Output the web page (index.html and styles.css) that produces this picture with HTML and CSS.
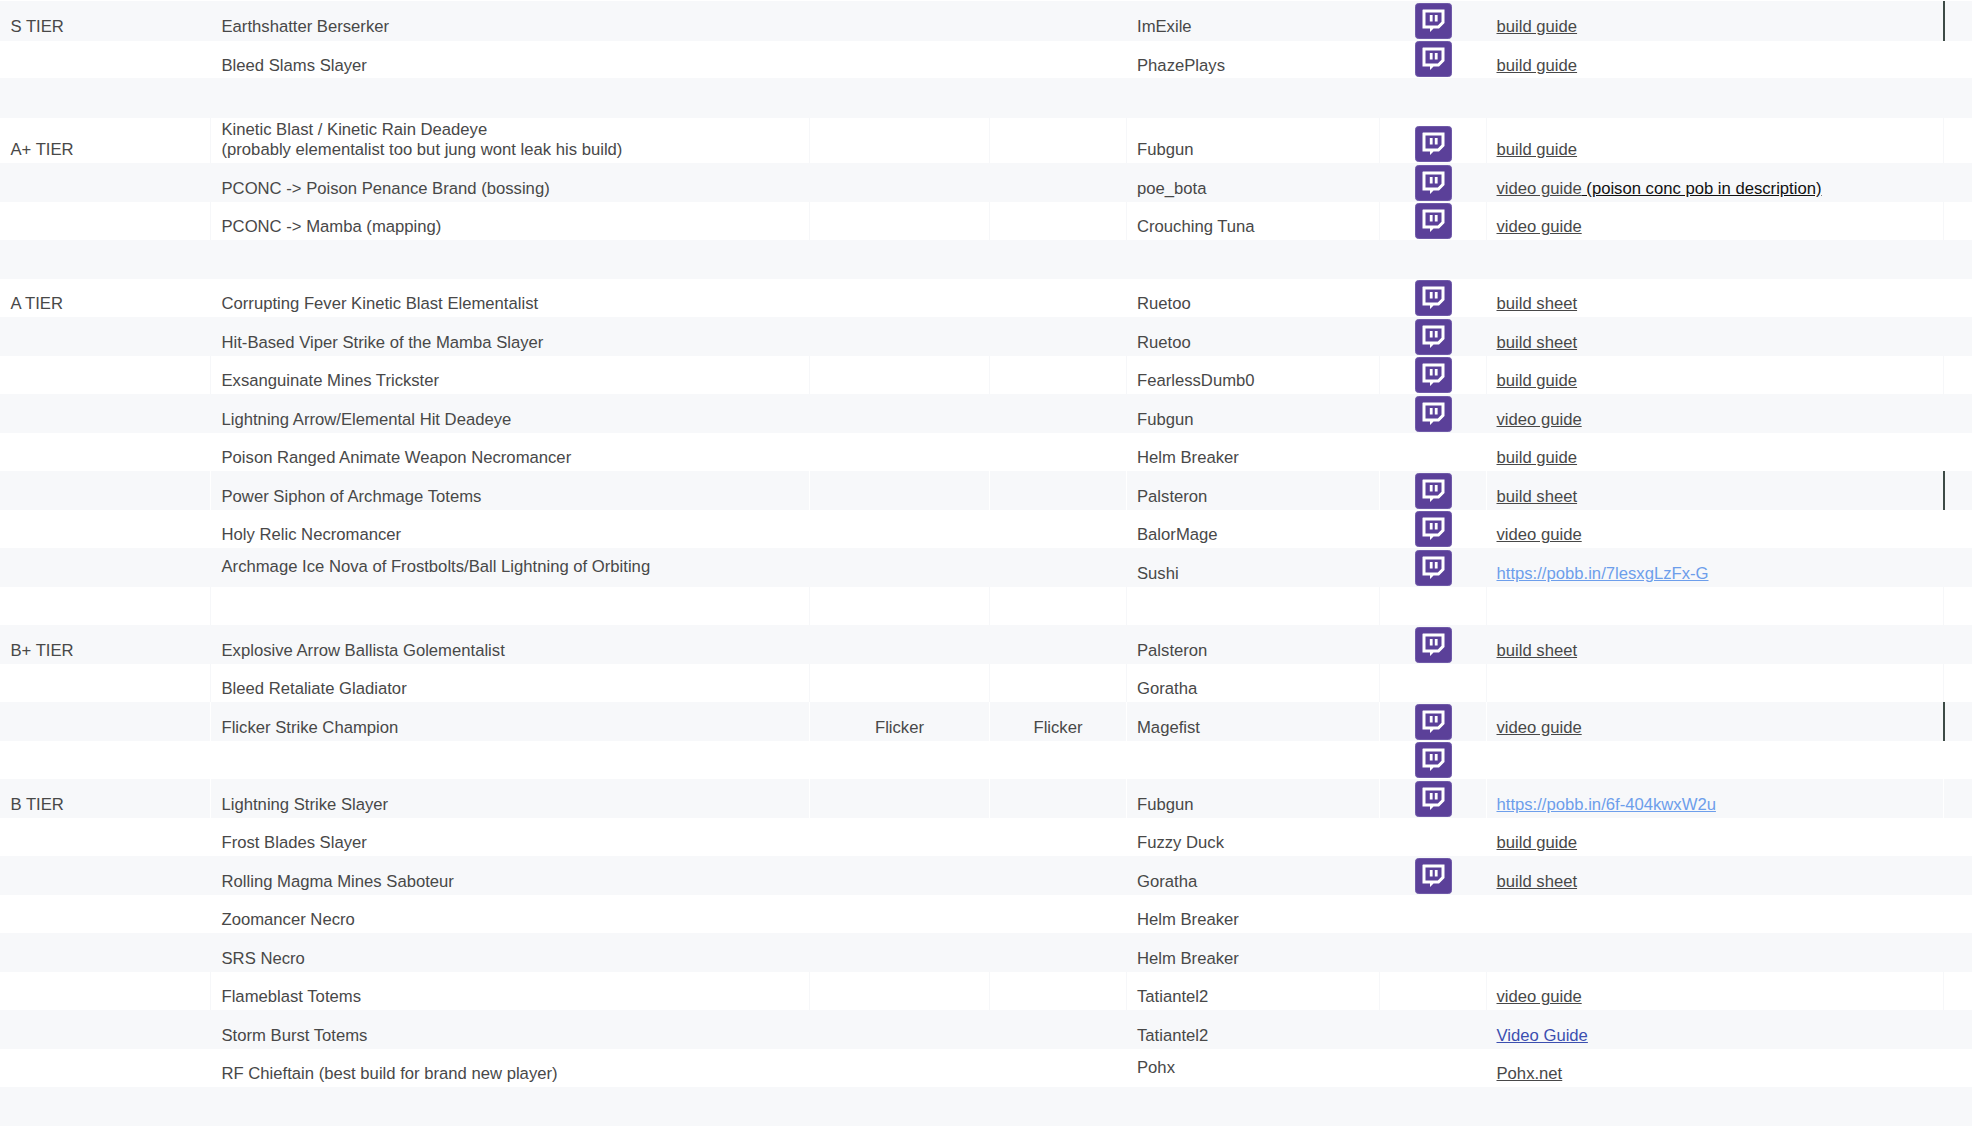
FILE: index.html
```html
<!DOCTYPE html>
<html lang="en">
<head>
<meta charset="utf-8">
<title>Build tier list</title>
<link rel="stylesheet" href="styles.css">
</head>
<body>
<svg class="sprite" width="0" height="0" aria-hidden="true">
  <symbol id="twitch" viewBox="0 0 37 36">
    <rect x=".5" y=".5" width="36" height="35" rx="3" fill="#5b4099" stroke="#6f5aa8"/>
    <path fill="#fff" fill-rule="evenodd" d="M8 6.500H29.500V20L24 25.500H18.500L15 29V25.500H7.500V7zM10.500 9.500V22.500H22.800L26.500 18.800V9.500z"/>
    <rect x="14.800" y="12" width="2.800" height="6.500" fill="#fff"/>
    <rect x="19.800" y="12" width="2.800" height="6.500" fill="#fff"/>
  </symbol>
</svg>
<table class="tiers">
  <colgroup>
    <col class="c-tier"><col class="c-build"><col class="c-a"><col class="c-b"><col class="c-author"><col class="c-stream"><col class="c-link"><col class="c-end">
  </colgroup>
  <tbody>
    <tr class="h-first"><td>S TIER</td><td>Earthshatter Berserker</td><td></td><td></td><td>ImExile</td><td class="stream"><svg class="tw"><use href="#twitch"/></svg></td><td><a href="#">build guide</a></td><td class="mark"></td></tr>
    <tr class="h-second"><td></td><td>Bleed Slams Slayer</td><td></td><td></td><td>PhazePlays</td><td class="stream"><svg class="tw"><use href="#twitch"/></svg></td><td><a href="#">build guide</a></td><td></td></tr>
    <tr class="h-third"><td></td><td></td><td></td><td></td><td></td><td></td><td></td><td></td></tr>
    <tr class="h-tall lined"><td>A+ TIER</td><td>Kinetic Blast / Kinetic Rain Deadeye<br>(probably elementalist too but jung wont leak his build)</td><td></td><td></td><td>Fubgun</td><td class="stream"><svg class="tw"><use href="#twitch"/></svg></td><td><a href="#">build guide</a></td><td></td></tr>
    <tr class="h-39"><td></td><td>PCONC -&gt; Poison Penance Brand (bossing)</td><td></td><td></td><td>poe_bota</td><td class="stream"><svg class="tw"><use href="#twitch"/></svg></td><td><a href="#">video guide</a><a href="#" class="note"> (poison conc pob in description)</a></td><td></td></tr>
    <tr class="h-38 lined"><td></td><td>PCONC -&gt; Mamba (mapping)</td><td></td><td></td><td>Crouching Tuna</td><td class="stream"><svg class="tw"><use href="#twitch"/></svg></td><td><a href="#">video guide</a></td><td></td></tr>
    <tr><td></td><td></td><td></td><td></td><td></td><td></td><td></td><td></td></tr>
    <tr><td>A TIER</td><td>Corrupting Fever Kinetic Blast Elementalist</td><td></td><td></td><td>Ruetoo</td><td class="stream"><svg class="tw"><use href="#twitch"/></svg></td><td><a href="#">build sheet</a></td><td></td></tr>
    <tr><td></td><td>Hit-Based Viper Strike of the Mamba Slayer</td><td></td><td></td><td>Ruetoo</td><td class="stream"><svg class="tw"><use href="#twitch"/></svg></td><td><a href="#">build sheet</a></td><td></td></tr>
    <tr class="lined"><td></td><td>Exsanguinate Mines Trickster</td><td></td><td></td><td>FearlessDumb0</td><td class="stream"><svg class="tw"><use href="#twitch"/></svg></td><td><a href="#">build guide</a></td><td></td></tr>
    <tr><td></td><td>Lightning Arrow/Elemental Hit Deadeye</td><td></td><td></td><td>Fubgun</td><td class="stream"><svg class="tw"><use href="#twitch"/></svg></td><td><a href="#">video guide</a></td><td></td></tr>
    <tr><td></td><td>Poison Ranged Animate Weapon Necromancer</td><td></td><td></td><td>Helm Breaker</td><td></td><td><a href="#">build guide</a></td><td></td></tr>
    <tr class="lined"><td></td><td>Power Siphon of Archmage Totems</td><td></td><td></td><td>Palsteron</td><td class="stream"><svg class="tw"><use href="#twitch"/></svg></td><td><a href="#">build sheet</a></td><td class="mark"></td></tr>
    <tr><td></td><td>Holy Relic Necromancer</td><td></td><td></td><td>BalorMage</td><td class="stream"><svg class="tw"><use href="#twitch"/></svg></td><td><a href="#">video guide</a></td><td></td></tr>
    <tr><td></td><td class="mid">Archmage Ice Nova of Frostbolts/Ball Lightning of Orbiting</td><td></td><td></td><td>Sushi</td><td class="stream"><svg class="tw"><use href="#twitch"/></svg></td><td><a href="#" class="pobb">https://pobb.in/7lesxgLzFx-G</a></td><td></td></tr>
    <tr class="lined"><td></td><td></td><td></td><td></td><td></td><td></td><td></td><td></td></tr>
    <tr><td>B+ TIER</td><td>Explosive Arrow Ballista Golementalist</td><td></td><td></td><td>Palsteron</td><td class="stream"><svg class="tw"><use href="#twitch"/></svg></td><td><a href="#">build sheet</a></td><td></td></tr>
    <tr class="lined"><td></td><td>Bleed Retaliate Gladiator</td><td></td><td></td><td>Goratha</td><td></td><td></td><td></td></tr>
    <tr class="lined"><td></td><td>Flicker Strike Champion</td><td class="center">Flicker</td><td class="center">Flicker</td><td>Magefist</td><td class="stream"><svg class="tw"><use href="#twitch"/></svg></td><td><a href="#">video guide</a></td><td class="mark"></td></tr>
    <tr><td></td><td></td><td></td><td></td><td></td><td class="stream"><svg class="tw"><use href="#twitch"/></svg></td><td></td><td></td></tr>
    <tr class="lined"><td>B TIER</td><td>Lightning Strike Slayer</td><td></td><td></td><td>Fubgun</td><td class="stream"><svg class="tw"><use href="#twitch"/></svg></td><td><a href="#" class="pobb">https://pobb.in/6f-404kwxW2u</a></td><td></td></tr>
    <tr><td></td><td>Frost Blades Slayer</td><td></td><td></td><td>Fuzzy Duck</td><td></td><td><a href="#">build guide</a></td><td></td></tr>
    <tr><td></td><td>Rolling Magma Mines Saboteur</td><td></td><td></td><td>Goratha</td><td class="stream"><svg class="tw"><use href="#twitch"/></svg></td><td><a href="#">build sheet</a></td><td></td></tr>
    <tr><td></td><td>Zoomancer Necro</td><td></td><td></td><td>Helm Breaker</td><td></td><td></td><td></td></tr>
    <tr><td></td><td>SRS Necro</td><td></td><td></td><td>Helm Breaker</td><td></td><td></td><td></td></tr>
    <tr class="lined"><td></td><td>Flameblast Totems</td><td></td><td></td><td>Tatiantel2</td><td></td><td><a href="#">video guide</a></td><td></td></tr>
    <tr><td></td><td>Storm Burst Totems</td><td></td><td></td><td>Tatiantel2</td><td></td><td><a href="#" class="blue">Video Guide</a></td><td></td></tr>
    <tr><td></td><td>RF Chieftain (best build for brand new player)</td><td></td><td></td><td class="mid">Pohx</td><td></td><td><a href="#">Pohx.net</a></td><td></td></tr>
    <tr><td></td><td></td><td></td><td></td><td></td><td></td><td></td><td></td></tr>
  </tbody>
</table>
</body>
</html>
```

FILE: styles.css
```css
html, body {
  margin: 0;
  background: #fff;
}

body {
  padding-top: 1px;
  font-family: "Liberation Sans", Arial, sans-serif;
  font-size: 16.67px;
  line-height: 20px;
  color: #484848;
}

.sprite {
  position: absolute;
}

.tiers {
  width: 1972px;
  table-layout: fixed;
  border-collapse: separate;
  border-spacing: 0;
}

.c-tier { width: 210px; }
.c-build { width: 599px; }
.c-a { width: 180px; }
.c-b { width: 137px; }
.c-author { width: 253px; }
.c-stream { width: 107px; }
.c-link { width: 457px; }
.c-end { width: 29px; }

.tiers tr {
  height: 38.5px;
}

.tiers tr:nth-child(odd) {
  background: #f7f8fa;
}

.tiers td {
  padding: 0 10px 3px;
  border-left: 1px solid transparent;
  vertical-align: bottom;
  white-space: nowrap;
  overflow: visible;
}

.tiers td:first-child {
  padding-left: 10.5px;
  border-left: 0;
}

.tiers td:nth-child(2) {
  padding-left: 10.5px;
}

.tiers td:nth-child(7) {
  padding-left: 9.5px;
}

.tiers tr.lined td:not(:first-child) {
  border-left-color: #f6f7f9;
}

.tiers tr.lined:nth-child(odd) td:not(:first-child) {
  border-left-color: #fff;
}

.tiers tr.h-first { height: 40px; }
.tiers tr.h-second { height: 37px; }
.tiers tr.h-third { height: 39.5px; }
.tiers tr.h-tall { height: 45.5px; }
.tiers tr.h-39 { height: 39px; }
.tiers tr.h-38 { height: 38px; }

.tiers tr.h-first td { padding-bottom: 4px; }
.tiers tr.h-second td { padding-bottom: 2px; }

.tiers td.stream {
  padding: 0 0 1px;
  text-align: center;
  line-height: 0;
}

.tiers tr.h-first td.stream { padding-bottom: 2px; }
.tiers tr.h-second td.stream { padding-bottom: 1px; }

.tiers td.center { text-align: center; }
.tiers td.mid { vertical-align: middle; padding-bottom: 0; }

.tiers tr td.mark,
.tiers tr.lined:nth-child(odd) td.mark:not(:first-child) {
  padding: 0;
  border-left: 2px solid #3d4b46;
}

.tw {
  display: inline-block;
  width: 37px;
  height: 36px;
}

a {
  color: #484848;
  text-decoration: underline;
}

a.note { color: #111; }
a.pobb { color: #6d9eeb; }
a.blue { color: #3c4fb0; }
```
